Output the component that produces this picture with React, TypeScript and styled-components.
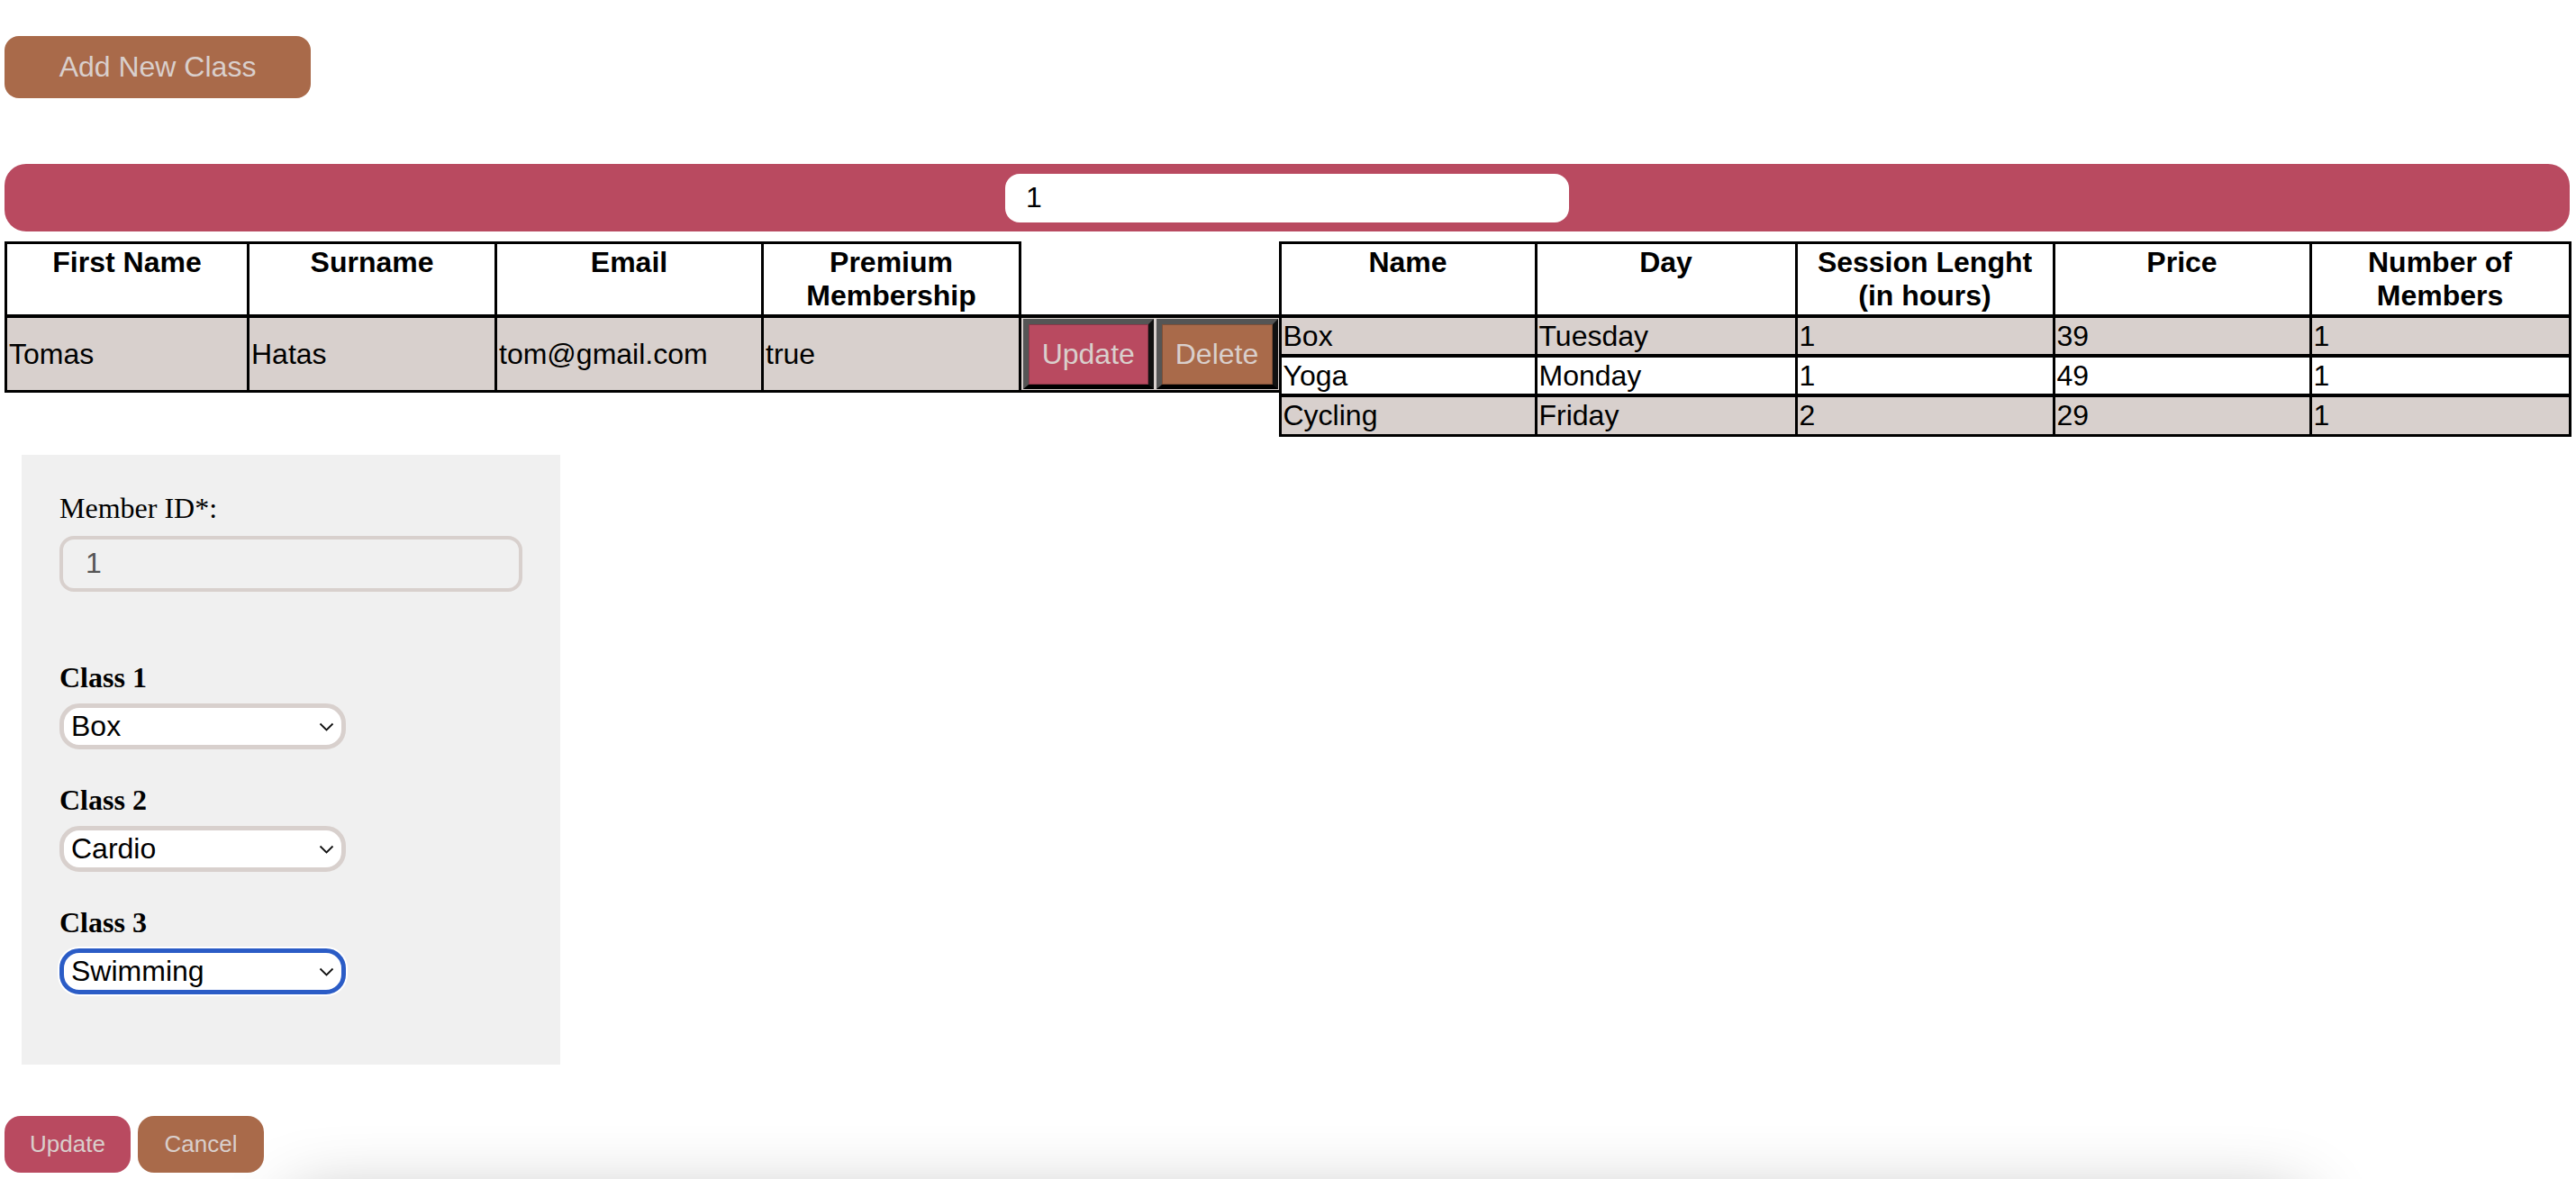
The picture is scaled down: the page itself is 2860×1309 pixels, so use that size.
import React from "react";
import styled, { createGlobalStyle } from "styled-components";

const GlobalStyle = createGlobalStyle`
  html, body { margin: 0; padding: 0; background: #ffffff; }
  body { font-family: "Liberation Sans", Arial, sans-serif; color: #000; }
  * { box-sizing: border-box; }
`;

const PINK = "#b94a60";
const BROWN = "#a96a4a";
const LIGHT_TEXT = "#d9cfcc";
const CELL_BG = "#d8d0cd";

const Page = styled.div`
  padding: 40px 7px 0 5px;
`;

const AddButton = styled.button`
  display: block;
  width: 340px;
  height: 69px;
  border: none;
  border-radius: 16px;
  background: ${BROWN};
  color: ${LIGHT_TEXT};
  font-family: "Liberation Sans", Arial, sans-serif;
  font-size: 32px;
  padding: 0;
`;

const SearchBar = styled.div`
  margin-top: 73px;
  height: 75px;
  border-radius: 24px;
  background: ${PINK};
  display: flex;
  align-items: center;
  justify-content: center;
`;

const SearchInput = styled.input`
  width: 626px;
  height: 54px;
  border: none;
  border-radius: 16px;
  background: #ffffff;
  padding: 0 0 0 23px;
  font-family: "Liberation Sans", Arial, sans-serif;
  font-size: 32px;
  color: #000;
  outline: none;
`;

const TablesRow = styled.div`
  margin-top: 11px;
  display: flex;
  justify-content: space-between;
  align-items: flex-start;
`;

const Table = styled.table<{ $w: number }>`
  width: ${(p) => p.$w}px;
  table-layout: fixed;
  border-collapse: collapse;
  font-size: 32px;
`;

const Col = styled.col<{ $w: number }>`
  width: ${(p) => p.$w}px;
`;

const Th = styled.th`
  border: 3px solid #000;
  background: #ffffff;
  font-weight: bold;
  text-align: center;
  vertical-align: top;
  padding: 2px 2px;
  line-height: 37px;
  height: 78px;
`;

const Tr = styled.tr<{ $shaded: boolean }>`
  background: ${(p) => (p.$shaded ? CELL_BG : "#ffffff")};
`;

const Td = styled.td<{ $h: number }>`
  border: 3px solid #000;
  border-top-width: 4px;
  padding: 0 2px;
  text-align: left;
  vertical-align: middle;
  line-height: 36px;
  height: ${(p) => p.$h}px;
  white-space: nowrap;
  overflow: hidden;
`;

const ActionCell = styled.td`
  border: 3px solid #000;
  border-top-width: 4px;
  border-left: none;
  border-right: none;
  background: ${CELL_BG};
  padding: 1px 1px 0 2px;
  vertical-align: middle;
`;

const CellButton = styled.button<{ $bg: string }>`
  display: block;
  width: 100%;
  height: 78px;
  background: ${(p) => p.$bg};
  color: ${LIGHT_TEXT};
  font-family: "Liberation Sans", Arial, sans-serif;
  font-size: 32px;
  padding: 0;
  border-style: solid;
  border-width: 6px 6px 5px 6px;
  border-color: #555555 #111111 #000000 #555555;
  box-shadow: inset 0 0 0 1px rgba(0, 0, 0, 0.25);
`;

const Panel = styled.div`
  margin-top: 20px;
  margin-left: 19px;
  width: 598px;
  background: #f0f0f0;
  padding: 41px 0 78px 42px;
`;

const FieldLabel = styled.label<{ $bold?: boolean }>`
  display: block;
  font-family: "Liberation Serif", "Times New Roman", serif;
  font-size: 32px;
  line-height: 37px;
  font-weight: ${(p) => (p.$bold ? "bold" : "normal")};
`;

const IdInput = styled.input`
  display: block;
  margin-top: 12px;
  width: 514px;
  height: 62px;
  border: 4px solid ${CELL_BG};
  border-radius: 16px;
  background: transparent;
  padding: 0 0 0 25px;
  font-family: "Liberation Sans", Arial, sans-serif;
  font-size: 32px;
  color: #555555;
  outline: none;
`;

const ClassGroup = styled.div<{ $gap: number }>`
  margin-top: ${(p) => p.$gap}px;
`;

const SelectWrap = styled.div`
  position: relative;
  margin-top: 10px;
  width: 318px;
`;

const Select = styled.select<{ $focused?: boolean }>`
  display: block;
  width: 318px;
  height: 51px;
  appearance: none;
  -webkit-appearance: none;
  border: 5px solid ${(p) => (p.$focused ? "#2b5cc6" : CELL_BG)};
  border-radius: 22px;
  background: #ffffff;
  padding: 0 0 0 8px;
  font-family: "Liberation Sans", Arial, sans-serif;
  font-size: 32px;
  color: #000;
  outline: none;
  box-shadow: ${(p) => (p.$focused ? "0 0 0 2px #ffffff" : "none")};
`;

const Chevron = styled.svg`
  position: absolute;
  right: 13px;
  top: 21px;
  width: 17px;
  height: 10px;
  pointer-events: none;
`;

const BottomBar = styled.div`
  margin-top: 57px;
  display: flex;
  gap: 8px;
`;

const BottomButton = styled.button<{ $bg: string }>`
  width: 140px;
  height: 63px;
  border: none;
  border-radius: 18px;
  background: ${(p) => p.$bg};
  color: ${LIGHT_TEXT};
  font-family: "Liberation Sans", Arial, sans-serif;
  font-size: 26px;
  padding: 0;
`;

const ShadowCard = styled.div`
  margin-top: 31px;
  margin-left: 320px;
  width: 2230px;
  height: 200px;
  background: #ffffff;
  box-shadow: 0 0 80px rgba(0, 0, 0, 0.3);
`;

const members = [
  { first: "Tomas", surname: "Hatas", email: "tom@gmail.com", premium: "true" },
];

const classes = [
  { name: "Box", day: "Tuesday", length: "1", price: "39", members: "1" },
  { name: "Yoga", day: "Monday", length: "1", price: "49", members: "1" },
  { name: "Cycling", day: "Friday", length: "2", price: "29", members: "1" },
];

const ChevronIcon = () => (
  <Chevron viewBox="0 0 17 10">
    <path d="M1.5 1.5 L8.5 8.5 L15.5 1.5" fill="none" stroke="#111" strokeWidth="1.8" />
  </Chevron>
);

const classSelects = [
  { label: "Class 1", value: "Box", gap: 77 },
  { label: "Class 2", value: "Cardio", gap: 38 },
  { label: "Class 3", value: "Swimming", gap: 38, focused: true },
];

export default function App() {
  return (
    <>
      <GlobalStyle />
      <Page>
        <AddButton>Add New Class</AddButton>
        <SearchBar>
          <SearchInput defaultValue="1" />
        </SearchBar>
        <TablesRow>
          <Table $w={1413}>
            <colgroup>
              <Col $w={269} />
              <Col $w={275} />
              <Col $w={296} />
              <Col $w={286} />
              <Col $w={149} />
              <Col $w={138} />
            </colgroup>
            <thead>
              <tr>
                <Th>First Name</Th>
                <Th>Surname</Th>
                <Th>Email</Th>
                <Th>
                  Premium
                  <br />
                  Membership
                </Th>
              </tr>
            </thead>
            <tbody>
              {members.map((m) => (
                <Tr key={m.email} $shaded>
                  <Td $h={83}>{m.first}</Td>
                  <Td $h={83}>{m.surname}</Td>
                  <Td $h={83}>{m.email}</Td>
                  <Td $h={83}>{m.premium}</Td>
                  <ActionCell>
                    <CellButton $bg={PINK}>Update</CellButton>
                  </ActionCell>
                  <ActionCell>
                    <CellButton $bg={BROWN}>Delete</CellButton>
                  </ActionCell>
                </Tr>
              ))}
            </tbody>
          </Table>
          <Table $w={1432}>
            <colgroup>
              <Col $w={284} />
              <Col $w={289} />
              <Col $w={286} />
              <Col $w={285} />
              <Col $w={288} />
            </colgroup>
            <thead>
              <tr>
                <Th>Name</Th>
                <Th>Day</Th>
                <Th>
                  Session Lenght
                  <br />
                  (in hours)
                </Th>
                <Th>Price</Th>
                <Th>
                  Number of
                  <br />
                  Members
                </Th>
              </tr>
            </thead>
            <tbody>
              {classes.map((c, i) => (
                <Tr key={c.name} $shaded={i % 2 === 0}>
                  <Td $h={44}>{c.name}</Td>
                  <Td $h={44}>{c.day}</Td>
                  <Td $h={44}>{c.length}</Td>
                  <Td $h={44}>{c.price}</Td>
                  <Td $h={44}>{c.members}</Td>
                </Tr>
              ))}
            </tbody>
          </Table>
        </TablesRow>
        <Panel>
          <FieldLabel>Member ID*:</FieldLabel>
          <IdInput defaultValue="1" readOnly />
          {classSelects.map((s) => (
            <ClassGroup key={s.label} $gap={s.gap}>
              <FieldLabel $bold>{s.label}</FieldLabel>
              <SelectWrap>
                <Select defaultValue={s.value} $focused={s.focused}>
                  <option>Box</option>
                  <option>Cardio</option>
                  <option>Swimming</option>
                  <option>Yoga</option>
                  <option>Cycling</option>
                </Select>
                <ChevronIcon />
              </SelectWrap>
            </ClassGroup>
          ))}
        </Panel>
        <BottomBar>
          <BottomButton $bg={PINK}>Update</BottomButton>
          <BottomButton $bg={BROWN}>Cancel</BottomButton>
        </BottomBar>
        <ShadowCard />
      </Page>
    </>
  );
}
